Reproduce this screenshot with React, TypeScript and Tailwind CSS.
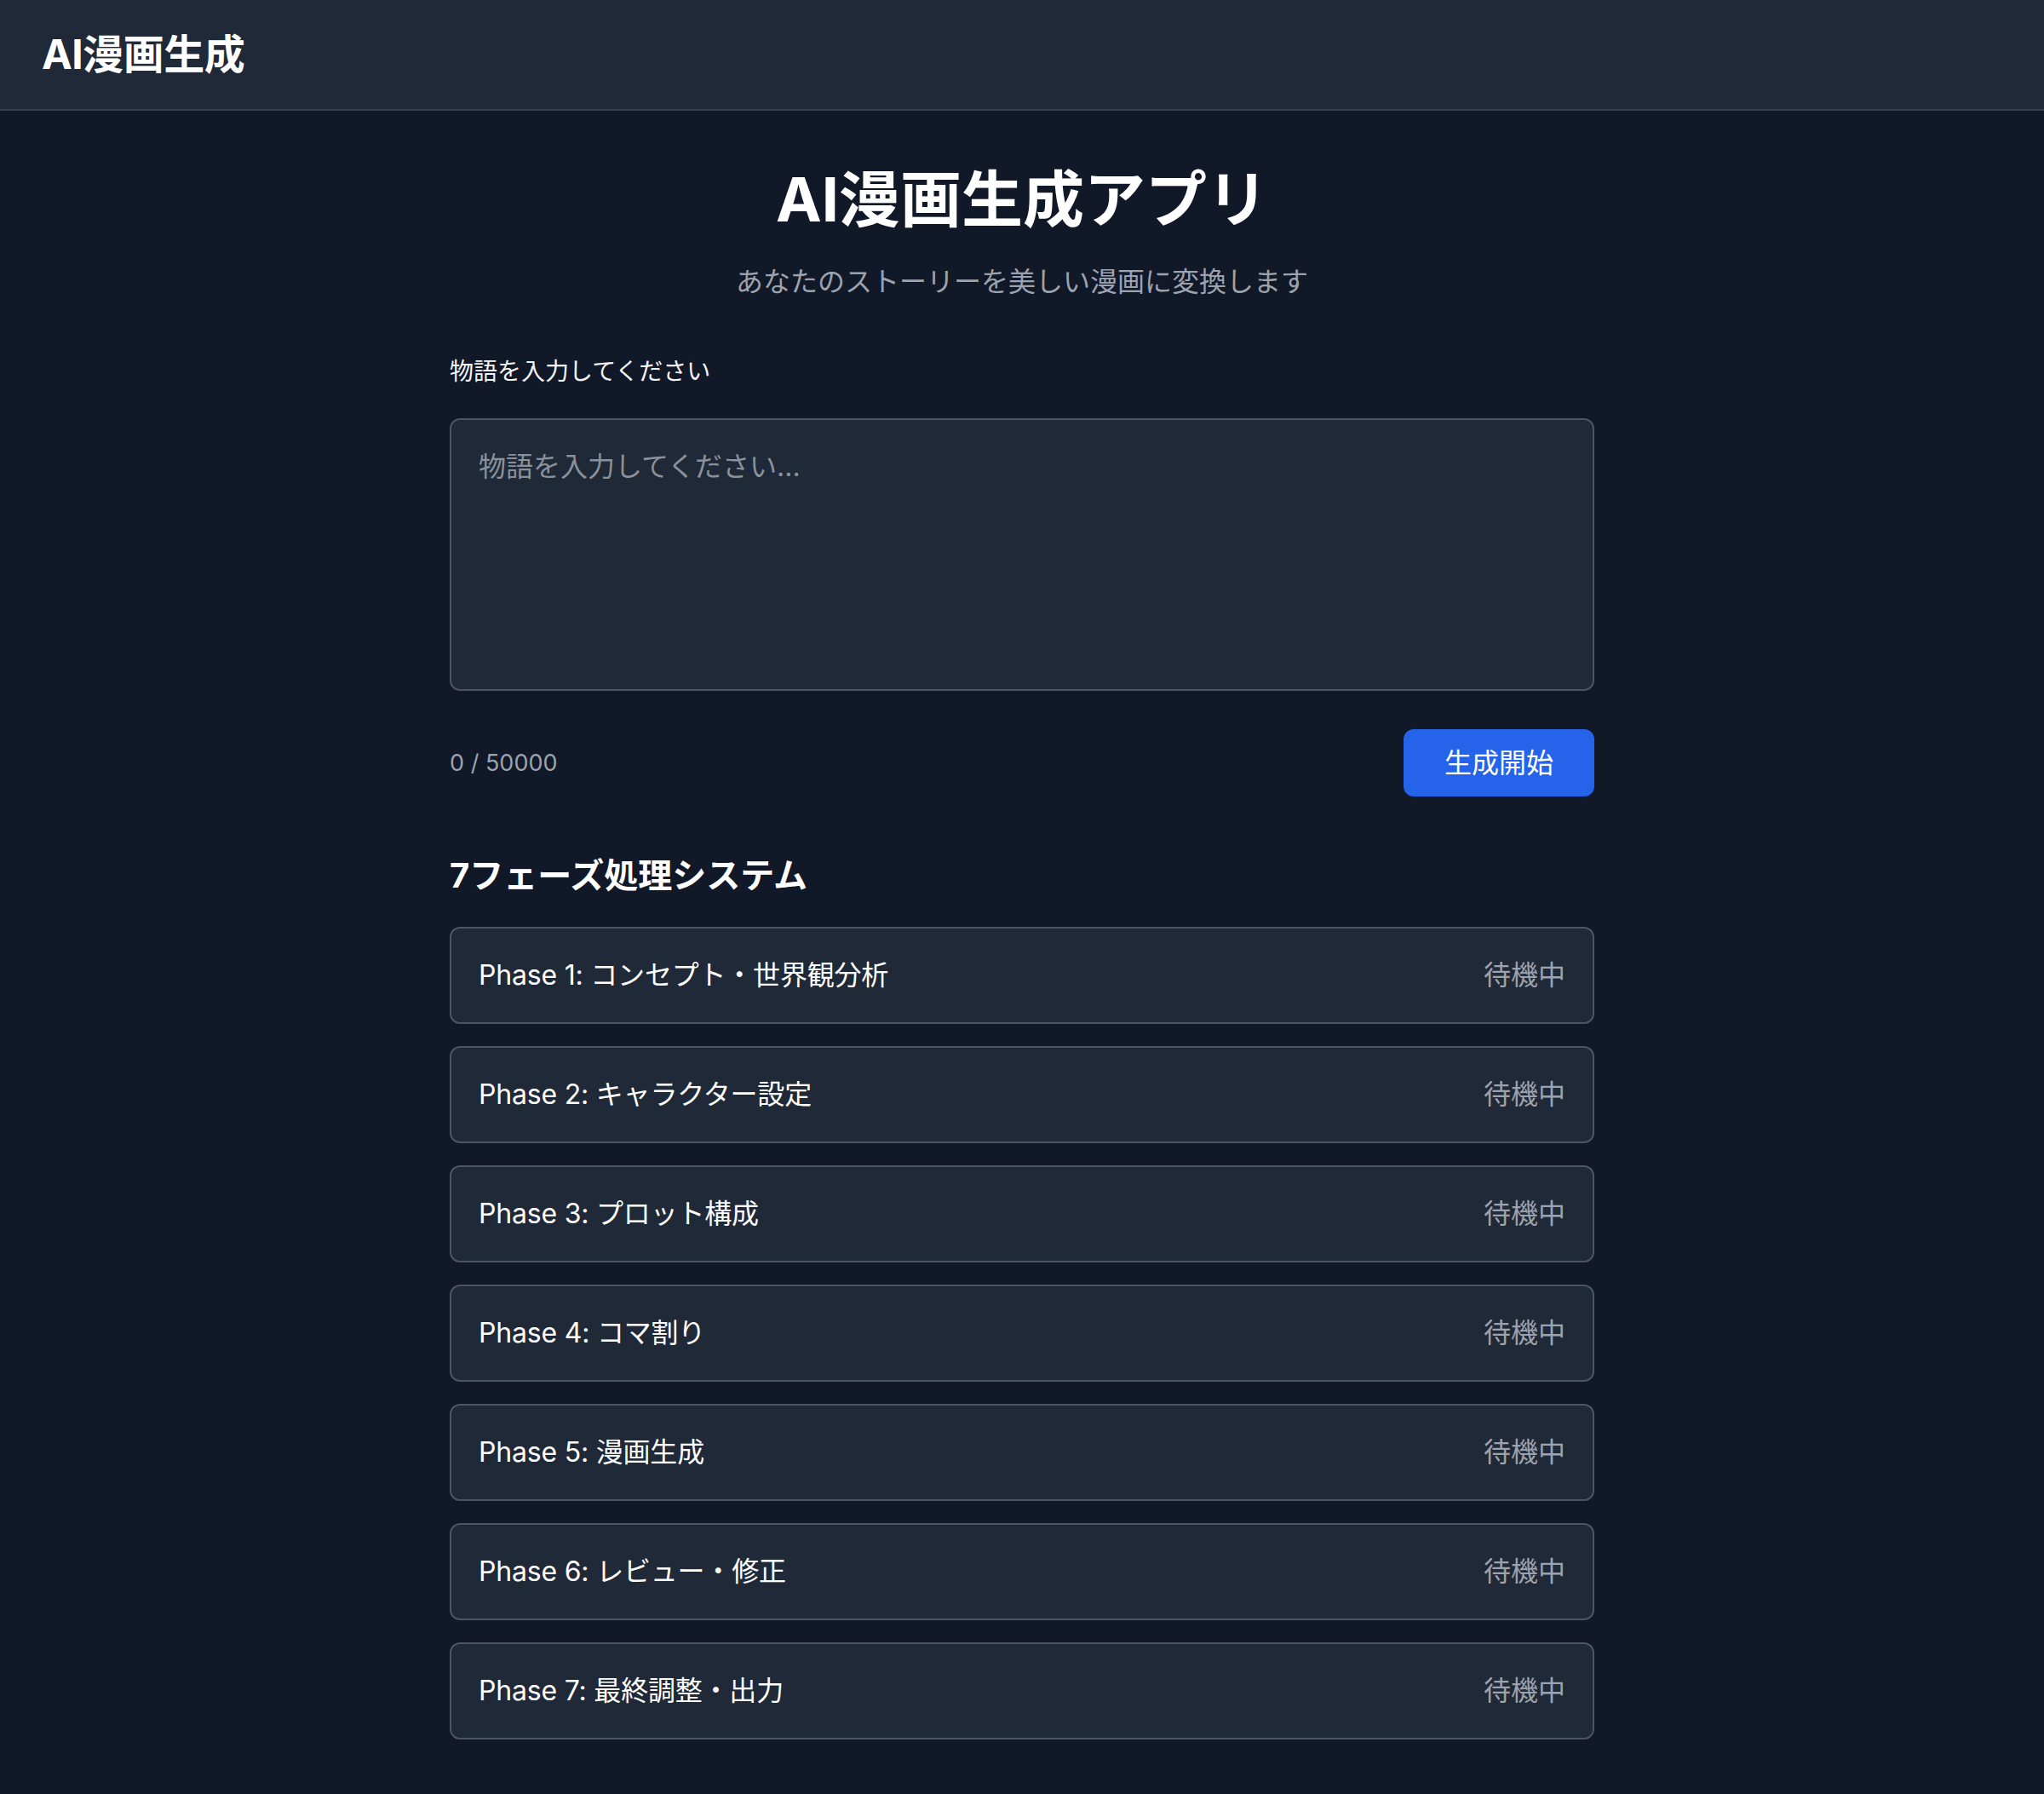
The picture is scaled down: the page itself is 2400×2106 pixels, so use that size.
import React from "react";

const phases = [
  "Phase 1: コンセプト・世界観分析",
  "Phase 2: キャラクター設定",
  "Phase 3: プロット構成",
  "Phase 4: コマ割り",
  "Phase 5: 漫画生成",
  "Phase 6: レビュー・修正",
  "Phase 7: 最終調整・出力",
];

export default function App() {
  return (
    <div
      className="min-h-screen bg-[#111827] text-white"
      style={{ fontFamily: 'Inter, "Noto Sans CJK JP", sans-serif' }}
    >
      <header className="h-[130px] bg-[#1f2937] border-b-2 border-[#374151] flex items-center px-[49px]">
        <h1 className="text-[48px] leading-[56px] font-bold tracking-[-0.5px]">AI漫画生成</h1>
      </header>
      <main className="max-w-[1344px] mx-auto pt-[68px] pb-[65px] flex flex-col">
        <h2 className="text-[72px] leading-[72px] font-bold text-center">AI漫画生成アプリ</h2>
        <p className="mt-[38px] text-[32px] leading-[46px] text-[#9ca3af] text-center">
          あなたのストーリーを美しい漫画に変換します
        </p>
        <label className="mt-[62px] text-[28px] leading-[40px] font-normal text-[#f3f4f6]">
          物語を入力してください
        </label>
        <textarea
          className="mt-[35px] h-[320px] w-full resize-none rounded-[12px] border-2 border-[#4b5563] bg-[#1f2937] p-[32px] text-[32px] leading-[46px] text-white placeholder:text-[#8b919b] outline-none"
          placeholder="物語を入力してください..."
        />
        <div className="mt-[45px] flex items-center justify-between">
          <span className="text-[27px] leading-[40px] text-[#9ca3af]">0 / 50000</span>
          <button className="h-[79px] px-[48px] rounded-[12px] bg-[#2563eb] text-[32px] leading-[46px] text-white">
            生成開始
          </button>
        </div>
        <h3 className="mt-[70px] text-[40px] leading-[46px] font-bold">7フェーズ処理システム</h3>
        <div className="mt-[37px] flex flex-col gap-[26px]">
          {phases.map((p) => (
            <div
              key={p}
              className="h-[114px] flex items-center justify-between rounded-[12px] border-2 border-[#4b5563] bg-[#1f2937] px-[32px]"
            >
              <span className="text-[32px] leading-[46px] text-white tracking-[-0.2px]">{p}</span>
              <span className="text-[32px] leading-[46px] text-[#9ca3af]">待機中</span>
            </div>
          ))}
        </div>
      </main>
    </div>
  );
}
